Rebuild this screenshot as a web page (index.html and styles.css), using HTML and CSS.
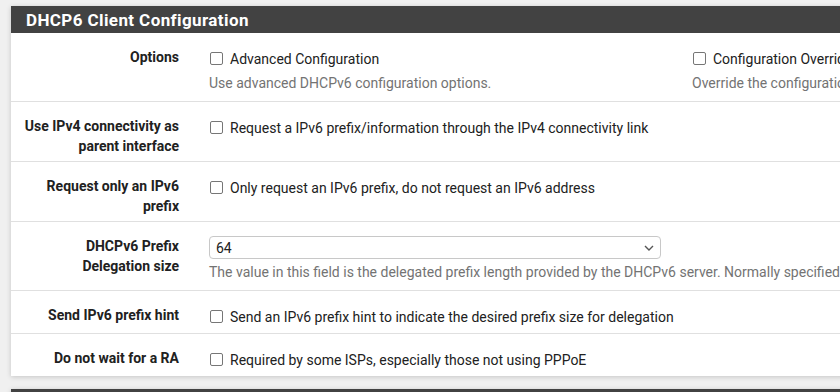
FILE: index.html
```html
<!DOCTYPE html>
<html>
<head>
  <title>Interfaces: WAN</title>
  <link rel="stylesheet" href="styles.css">
</head>
<body>
  <div class="panel">
    <div class="panel-heading">
      <h2 class="panel-title">DHCP6 Client Configuration</h2>
    </div>
    <div class="panel-body">
      <div class="form-group">
        <span class="col-label">Options</span>
        <div class="col-field cols">
          <div>
            <label class="check"><input type="checkbox"/> Advanced Configuration</label>
            <span class="help">Use advanced DHCPv6 configuration options.</span>
          </div>
          <div>
            <label class="check"><input type="checkbox"/> Configuration Override</label>
            <span class="help">Override the configuration from this file.</span>
          </div>
        </div>
      </div>

      <div class="form-group">
        <span class="col-label">Use IPv4 connectivity as parent interface</span>
        <div class="col-field">
          <label class="check"><input type="checkbox"/> Request a IPv6 prefix/information through the IPv4 connectivity link</label>
        </div>
      </div>

      <div class="form-group">
        <span class="col-label">Request only an IPv6 prefix</span>
        <div class="col-field">
          <label class="check"><input type="checkbox"/> Only request an IPv6 prefix, do not request an IPv6 address</label>
        </div>
      </div>

      <div class="form-group">
        <span class="col-label">DHCPv6 Prefix Delegation size</span>
        <div class="col-field">
          <div class="select-wrap">
            <select class="form-control">
              <option>64</option>
            </select>
            <svg class="caret" width="10" height="6" viewBox="0 0 10 6"><path d="M1 1l4 4 4-4" fill="none" stroke="#555" stroke-width="1.4"/></svg>
          </div>
          <span class="help">The value in this field is the delegated prefix length provided by the DHCPv6 server. Normally specified by the ISP.</span>
        </div>
      </div>

      <div class="form-group">
        <span class="col-label">Send IPv6 prefix hint</span>
        <div class="col-field">
          <label class="check"><input type="checkbox"/> Send an IPv6 prefix hint to indicate the desired prefix size for delegation</label>
        </div>
      </div>

      <div class="form-group">
        <span class="col-label">Do not wait for a RA</span>
        <div class="col-field">
          <label class="check"><input type="checkbox"/> Required by some ISPs, especially those not using PPPoE</label>
        </div>
      </div>
    </div>
  </div>

  <div class="panel">
    <div class="panel-heading">
      <h2 class="panel-title">Reserved Networks</h2>
    </div>
  </div>
</body>
</html>
```

FILE: styles.css
```css
html, body {
  margin: 0;
  overflow: hidden;
}
body {
  font-family: Roboto, "Liberation Sans", sans-serif;
  font-size: 14px;
  color: #212121;
  background-color: #f0f0f0;
  padding: 6px 0 0 11px;
}
.panel {
  width: 1120px;
  background: white;
  box-shadow: 0px 1px 5px rgba(0, 0, 0, 0.18);
  margin-bottom: 13px;
}
.panel-heading {
  background: #424242;
  height: 27px;
  padding: 0 15px;
  display: flex;
  align-items: center;
}
.panel-title {
  margin: 0;
  color: white;
  font-size: 17px;
  font-weight: bold;
  letter-spacing: 0.4px;
}
.form-group {
  display: grid;
  grid-template-columns: 183px 1fr;
  padding: 14px 0 5px 0;
  border-bottom: 1px solid #e0e0e0;
}
.form-group:last-child {
  border-bottom: none;
}
.col-label {
  padding: 0 15px 0 8px;
  text-align: right;
  font-weight: bold;
  line-height: 20px;
  color: #212121;
}
.col-field {
  padding: 0 15px;
}
.cols {
  display: grid;
  grid-template-columns: 483px 483px;
}
.check {
  display: flex;
  align-items: center;
  height: 23px;
  white-space: nowrap;
}
.check input {
  appearance: none;
  width: 13px;
  height: 13px;
  margin: 0 7px 0 1px;
  border: 1px solid #767676;
  border-radius: 2px;
  background: white;
}
.help {
  display: block;
  color: #737373;
  line-height: 20px;
  margin: 3px 0 3px 0;
  white-space: nowrap;
}
.select-wrap {
  position: relative;
  width: 452px;
}
.form-control {
  appearance: none;
  width: 452px;
  height: 23px;
  padding: 0 6px;
  border: 1px solid #c8c8c8;
  border-radius: 4px;
  background: white;
  font-family: Roboto, "Liberation Sans", sans-serif;
  font-size: 14px;
  color: #212121;
}
.caret {
  position: absolute;
  right: 7px;
  top: 9px;
}
```
